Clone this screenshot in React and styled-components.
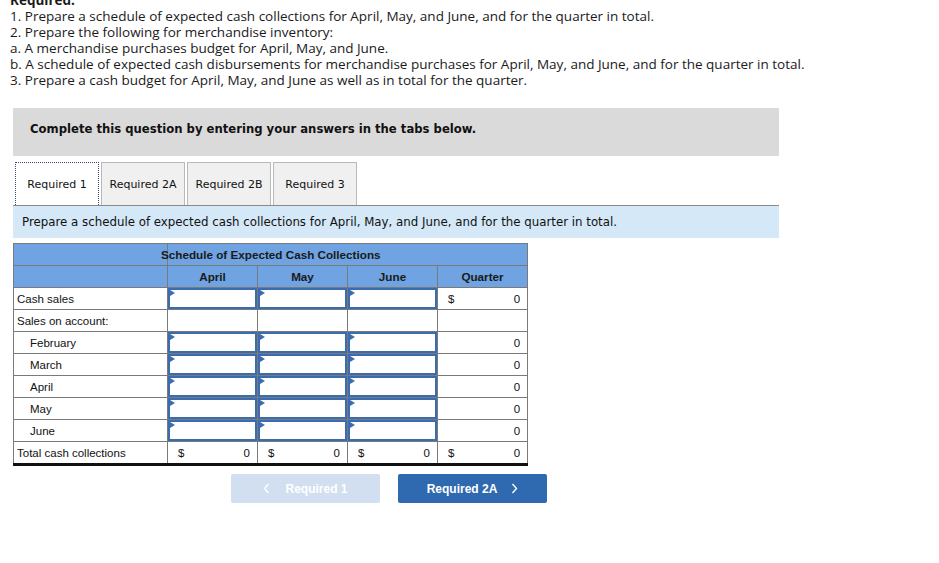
import React from "react";
import styled, { createGlobalStyle } from "styled-components";

const GlobalStyle = createGlobalStyle`
  body {
    margin: 0;
    background: #fff;
    font-family: "Open Sans", "Liberation Sans", sans-serif;
    color: #1a1a1a;
  }
`;

const Page = styled.div`
  width: 939px;
  height: 563px;
  overflow: hidden;
`;

const Intro = styled.div`
  margin-top: -8px;
  padding-left: 10px;
  font-size: 13.5px;
  line-height: 16px;
  color: #1a1a1a;
`;

const IntroHead = styled.div`
  font-weight: 700;
`;

const Panel = styled.div`
  margin: 20px 0 0 13px;
  width: 766px;
`;

const Banner = styled.div`
  height: 48px;
  background: #dadada;
  display: flex;
  align-items: center;
  padding-left: 17px;
  padding-bottom: 6px;
  box-sizing: border-box;
  font-family: "DejaVu Sans", Verdana, sans-serif;
  font-weight: 700;
  font-size: 11.65px;
  color: #111;
`;

const Tabs = styled.div`
  display: flex;
  gap: 2px;
  margin-top: 6px;
  padding-left: 2px;
`;

const Tab = styled.div`
  height: 43px;
  width: ${(p) => p.$w}px;
  display: flex;
  align-items: center;
  justify-content: center;
  box-sizing: border-box;
  font-family: "DejaVu Sans", Verdana, sans-serif;
  font-size: 11px;
  color: #111;
  background: ${(p) => (p.$active ? "#fff" : "#f0f0f0")};
  border: 1px ${(p) => (p.$active ? "dotted #3a4a6a" : "solid #b9b9b9")};
  border-bottom: none;
`;

const Instruction = styled.div`
  height: 33px;
  border-top: 1px solid #8a8a8a;
  background: #d4e8f7;
  display: flex;
  align-items: center;
  padding-left: 9px;
  box-sizing: border-box;
  font-family: "DejaVu Sans", Verdana, sans-serif;
  font-size: 11.8px;
  color: #111;
`;

const Table = styled.table`
  margin: 5px 0 0 13px;
  border-collapse: collapse;
  font-family: "Liberation Sans", Arial, sans-serif;
  font-size: 11.5px;
  color: #111;
  table-layout: fixed;
  width: 515px;
`;

const HeadCell = styled.th`
  background: #6fa3e1;
  border: 1px solid #7a7a7a;
  border-left-color: ${(p) => (p.$title ? "#6fa3e1" : "#7a7a7a")};
  height: 21px;
  padding: 0;
  font-weight: 700;
  font-size: 11.7px;
  color: #1a1a1a;
  text-align: ${(p) => (p.$title ? "left" : "center")};
`;

const Title = styled.span`
  margin-left: -7px;
`;

const Label = styled.td`
  border: 1px solid #7a7a7a;
  height: 21px;
  padding: 0 0 0 ${(p) => (p.$indent ? 16 : 3)}px;
  white-space: nowrap;
  border-bottom: ${(p) => (p.$total ? "3px solid #111" : "1px solid #7a7a7a")};
  border-top: ${(p) => (p.$total ? "1px solid #111" : "1px solid #7a7a7a")};
`;

const Cell = styled.td`
  border: 1px solid #7a7a7a;
  height: 21px;
  padding: 0;
  position: relative;
  border-bottom: ${(p) => (p.$total ? "3px solid #111" : "1px solid #7a7a7a")};
  border-top: ${(p) => (p.$total ? "1px solid #111" : "1px solid #7a7a7a")};
`;

const InputBox = styled.div`
  position: absolute;
  inset: 0;
  border: 2px solid #3b6cb0;
  background: #fff;
  &::before {
    content: "";
    position: absolute;
    left: 0;
    top: 0;
    border-left: 5px solid #3b6cb0;
    border-top: 3px solid transparent;
    border-bottom: 3px solid transparent;
  }
`;

const Amount = styled.div`
  display: flex;
  justify-content: space-between;
  padding: 0 7px 0 10px;
`;

const Nav = styled.div`
  display: flex;
  gap: 18px;
  margin: 8px 0 0 231px;
`;

const NavButton = styled.div`
  width: 149px;
  height: 29px;
  border-radius: 2px;
  display: flex;
  align-items: center;
  justify-content: center;
  gap: ${(p) => (p.$next ? 14 : 15)}px;
  font-family: "Liberation Sans", Arial, sans-serif;
  font-weight: 700;
  font-size: 12px;
  color: #fff;
  background: ${(p) => (p.$disabled ? "#d1dff0" : "#2f69b0")};
`;

const Chevron = ({ dir }) => (
  <svg width="7" height="11" viewBox="0 0 7 11">
    <path
      d={dir === "left" ? "M5.5 1 L1.5 5.5 L5.5 10" : "M1.5 1 L5.5 5.5 L1.5 10"}
      fill="none"
      stroke="#fff"
      strokeWidth="1.4"
    />
  </svg>
);

const rows = [
  { label: "Cash sales", inputs: true, quarter: "$" },
  { label: "Sales on account:", inputs: false, quarter: null },
  { label: "February", indent: true, inputs: true, quarter: "0" },
  { label: "March", indent: true, inputs: true, quarter: "0" },
  { label: "April", indent: true, inputs: true, quarter: "0" },
  { label: "May", indent: true, inputs: true, quarter: "0" },
  { label: "June", indent: true, inputs: true, quarter: "0" },
];

const App = () => {
  return (
    <Page>
      <GlobalStyle />
      <Intro>
        <IntroHead>Required:</IntroHead>
        <div>1. Prepare a schedule of expected cash collections for April, May, and June, and for the quarter in total.</div>
        <div>2. Prepare the following for merchandise inventory:</div>
        <div>a. A merchandise purchases budget for April, May, and June.</div>
        <div>b. A schedule of expected cash disbursements for merchandise purchases for April, May, and June, and for the quarter in total.</div>
        <div>3. Prepare a cash budget for April, May, and June as well as in total for the quarter.</div>
      </Intro>
      <Panel>
        <Banner>Complete this question by entering your answers in the tabs below.</Banner>
        <Tabs>
          <Tab $active $w={84}>Required 1</Tab>
          <Tab $w={84}>Required 2A</Tab>
          <Tab $w={84}>Required 2B</Tab>
          <Tab $w={84}>Required 3</Tab>
        </Tabs>
        <Instruction>
          Prepare a schedule of expected cash collections for April, May, and June, and for the quarter in total.
        </Instruction>
      </Panel>
      <Table>
        <colgroup>
          <col style={{ width: 154 }} />
          <col style={{ width: 90 }} />
          <col style={{ width: 90 }} />
          <col style={{ width: 90 }} />
          <col style={{ width: 90 }} />
        </colgroup>
        <thead>
          <tr>
            <HeadCell />
            <HeadCell $title colSpan={4}>
              <Title>Schedule of Expected Cash Collections</Title>
            </HeadCell>
          </tr>
          <tr>
            <HeadCell />
            <HeadCell>April</HeadCell>
            <HeadCell>May</HeadCell>
            <HeadCell>June</HeadCell>
            <HeadCell>Quarter</HeadCell>
          </tr>
        </thead>
        <tbody>
          {rows.map((r) => (
            <tr key={r.label + (r.indent ? "i" : "")}>
              <Label $indent={r.indent}>{r.label}</Label>
              {[0, 1, 2].map((i) => (
                <Cell key={i}>{r.inputs && <InputBox />}</Cell>
              ))}
              <Cell>
                {r.quarter === "$" && (
                  <Amount>
                    <span>$</span>
                    <span>0</span>
                  </Amount>
                )}
                {r.quarter === "0" && (
                  <Amount>
                    <span />
                    <span>0</span>
                  </Amount>
                )}
              </Cell>
            </tr>
          ))}
          <tr>
            <Label $total>Total cash collections</Label>
            {[0, 1, 2, 3].map((i) => (
              <Cell $total key={i}>
                <Amount>
                  <span>$</span>
                  <span>0</span>
                </Amount>
              </Cell>
            ))}
          </tr>
        </tbody>
      </Table>
      <Nav>
        <NavButton $disabled>
          <Chevron dir="left" />
          Required 1
        </NavButton>
        <NavButton $next>
          Required 2A
          <Chevron dir="right" />
        </NavButton>
      </Nav>
    </Page>
  );
};

export default App;
